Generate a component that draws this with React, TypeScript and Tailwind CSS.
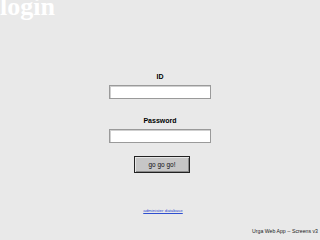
export default function App() {
  return (
    <div className="relative flex h-[240px] w-[320px] flex-col overflow-hidden bg-[#e9e9e9] font-['Liberation_Sans',Arial,sans-serif]">
      <h1 className="-mt-[6px] font-['Liberation_Serif','Times_New_Roman',serif] text-[26px] font-bold leading-[26px] text-white">
        login
      </h1>

      <div className="mt-[53px] flex flex-col items-center">
        <label className="text-[7px] font-bold leading-[8px] text-black">ID</label>
        <input
          className="mt-[4px] h-[14px] w-[102px] border border-[#9a9a9a] bg-white shadow-[inset_1px_1px_0_#cfcfcf]"
          type="text"
        />

        <label className="mt-[18px] text-[7px] font-bold leading-[8px] text-black">
          Password
        </label>
        <input
          className="mt-[4px] h-[14px] w-[102px] border border-[#9a9a9a] bg-white shadow-[inset_1px_1px_0_#cfcfcf]"
          type="password"
        />

        <button className="mt-[13px] ml-[4px] flex h-[17px] w-[56px] items-center justify-center border border-[#222] bg-[#c6c6c6] text-[6.5px] leading-[8px] text-[#111] shadow-[inset_1px_1px_0_#e6e6e6,inset_-1px_-1px_0_#8a8a8a]">
          go go go!
        </button>

        <a className="mt-[35px] ml-[6px] text-[4.4px] leading-[5px] text-[#2f4fd0] underline" href="#">
          administer database
        </a>
      </div>

      <p className="mt-auto mb-[6px] mr-[2px] text-right text-[5.2px] leading-[6px] text-[#222]">
        Urga Web App -- Screens v3
      </p>
    </div>
  )
}
